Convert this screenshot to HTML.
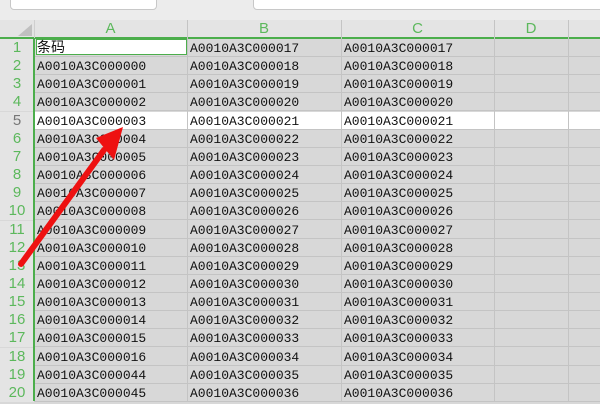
<!DOCTYPE html>
<html><head><style>
body{margin:0;width:600px;height:401px;overflow:hidden;background:#d8d8d8;position:relative;font-family:"Liberation Mono",monospace}
.a{position:absolute}
.r{position:absolute;left:0;width:600px;height:17px;border-bottom:1px solid #c4c4c4}
.n{position:absolute;left:0;width:34px;text-align:center;color:#5cb85c;font:15px "Liberation Sans",sans-serif;line-height:18px;background:#e4e4e4}
.c{position:absolute;font-size:13px;line-height:20px;color:#111;top:0}
.v{position:absolute;top:20px;width:1px;height:381px;background:#c4c4c4}
</style></head><body>
<div class="a" style="left:0;top:0;width:600px;height:20px;background:#ececec;border-bottom:1px solid #cfcfcf"></div>
<div class="a" style="left:10px;top:-4px;width:145px;height:12px;background:#fff;border:1px solid #c8c8c8;border-radius:4px"></div>
<div class="a" style="left:253px;top:-4px;width:360px;height:12px;background:#fff;border:1px solid #c8c8c8;border-radius:4px"></div>
<div class="a" style="left:0;top:20px;width:600px;height:17px;background:#e4e4e4"></div>
<svg class="a" style="left:18px;top:24px" width="14" height="12"><polygon points="14,0 14,12 0,12" fill="#c0c0c0"/></svg>
<div class="a" style="left:34px;top:20px;width:153px;text-align:center;color:#5cb85c;font:15px 'Liberation Sans',sans-serif;line-height:17px">A</div>
<div class="a" style="left:187px;top:20px;width:154px;text-align:center;color:#5cb85c;font:15px 'Liberation Sans',sans-serif;line-height:17px">B</div>
<div class="a" style="left:341px;top:20px;width:153px;text-align:center;color:#5cb85c;font:15px 'Liberation Sans',sans-serif;line-height:17px">C</div>
<div class="a" style="left:494px;top:20px;width:74px;text-align:center;color:#5cb85c;font:15px 'Liberation Sans',sans-serif;line-height:17px">D</div>
<div class="a" style="left:0;top:37px;width:600px;height:2px;background:#4cae4c"></div>
<div id="rows"></div>
<div class="v" style="left:34px;background:#cfcfcf"></div>
<div class="v" style="left:187px"></div>
<div class="v" style="left:341px"></div>
<div class="v" style="left:494px"></div>
<div class="v" style="left:568px"></div>
<div class="a" style="left:33px;top:38px;width:2px;height:363px;background:#4cae4c"></div>
<div class="a" style="left:36px;top:39px;width:149px;height:14px;border:1px solid #4cae4c;background:#fff"></div>
<script>
var h='';var a=['','000000','000001','000002','000003','000004','000005','000006','000007','000008','000009','000010','000011','000012','000013','000014','000015','000016','000044','000045'];
for(var i=0;i<20;i++){var t=39+i*18.15;var w=i==4;
h+='<div class="r" style="top:'+t+'px;'+(w?'background:#fff;':'')+'"><div class="n" style="'+(w?'color:#777;':'')+'">'+(i+1)+'</div>'
+'<div class="c" style="left:37px;top:0px;z-index:3">'+(i==0?'<span style="font-family:\'Noto Sans CJK SC\',sans-serif;font-size:14px;position:relative;top:-2px">条码</span>':'A0010A3C'+a[i])+'</div>'
+'<div class="c" style="left:190px">A0010A3C0000'+(17+i)+'</div><div class="c" style="left:344px">A0010A3C0000'+(17+i)+'</div></div>';}
document.getElementById('rows').innerHTML=h;
</script>
<svg class="a" style="left:0;top:0;z-index:5" width="600" height="401"><line x1="21" y1="264" x2="104" y2="150" stroke="#ee1111" stroke-width="6" stroke-linecap="round"/><polygon points="123,127 96,138 114,160" fill="#ee1111"/></svg>
</body></html>
